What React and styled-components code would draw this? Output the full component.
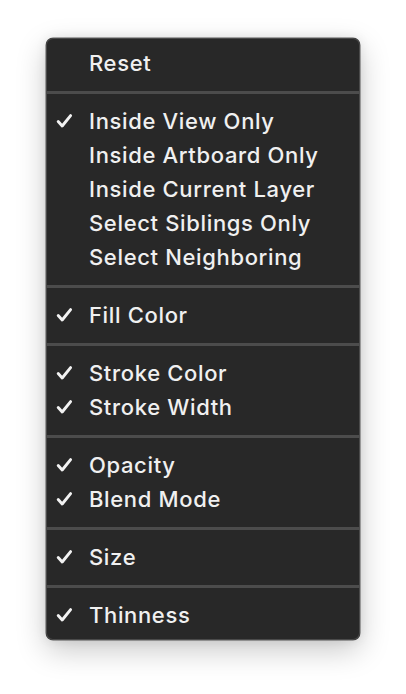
import React from "react";
import styled, { createGlobalStyle } from "styled-components";

const Global = createGlobalStyle`
  html, body { margin: 0; padding: 0; background: #ffffff; }
  body { width: 406px; height: 694px; overflow: hidden; }
`;

const Page = styled.div`
  width: 406px;
  height: 694px;
  display: flex;
  justify-content: center;
  padding-top: 38px;
  box-sizing: border-box;
  background: #ffffff;
`;

const Menu = styled.div`
  width: 314px;
  box-sizing: border-box;
  height: 602px;
  padding: 8px 0;
  background: #282828;
  border-radius: 7px;
  box-shadow: 0 0 0 1px #4a4a4a inset, 0 0 0 0.5px rgba(0,0,0,0.6), 0 10px 30px rgba(0, 0, 0, 0.22), 0 0 12px rgba(0,0,0,0.08);
  display: flex;
  flex-direction: column;
  font-family: "Inter", "Liberation Sans", sans-serif;
`;

const Item = styled.div`
  height: 34px;
  display: flex;
  align-items: center;
  padding-left: 10px;
  color: #f0f0f0;
  font-size: 22px;
  font-weight: 500;
  letter-spacing: 0.65px;
`;

const Check = styled.span`
  width: 33px;
  display: flex;
  align-items: center;
  justify-content: flex-start;
`;

const Sep = styled.div`
  height: 24px;
  display: flex;
  align-items: center;
  &::after {
    content: "";
    display: block;
    width: 100%;
    height: 3px;
    background: #4c4c4c;
  }
`;

const CheckMark = () => (
  <svg width="17" height="16" viewBox="0 0 17 16">
    <path d="M2.2 8.6 L6.2 13 L14.6 2.6" fill="none" stroke="#f2f2f2" strokeWidth="2.9" strokeLinecap="round" strokeLinejoin="round" />
  </svg>
);

const groups = [
  [["Reset", false]],
  [
    ["Inside View Only", true],
    ["Inside Artboard Only", false],
    ["Inside Current Layer", false],
    ["Select Siblings Only", false],
    ["Select Neighboring", false],
  ],
  [["Fill Color", true]],
  [["Stroke Color", true], ["Stroke Width", true]],
  [["Opacity", true], ["Blend Mode", true]],
  [["Size", true]],
  [["Thinness", true]],
];

export default function App() {
  return (
    <>
      <Global />
      <Page>
        <Menu>
          {groups.map((g, gi) => (
            <React.Fragment key={gi}>
              {gi > 0 && <Sep />}
              {g.map(([label, checked]) => (
                <Item key={label}>
                  <Check>{checked && <CheckMark />}</Check>
                  {label}
                </Item>
              ))}
            </React.Fragment>
          ))}
        </Menu>
      </Page>
    </>
  );
}
